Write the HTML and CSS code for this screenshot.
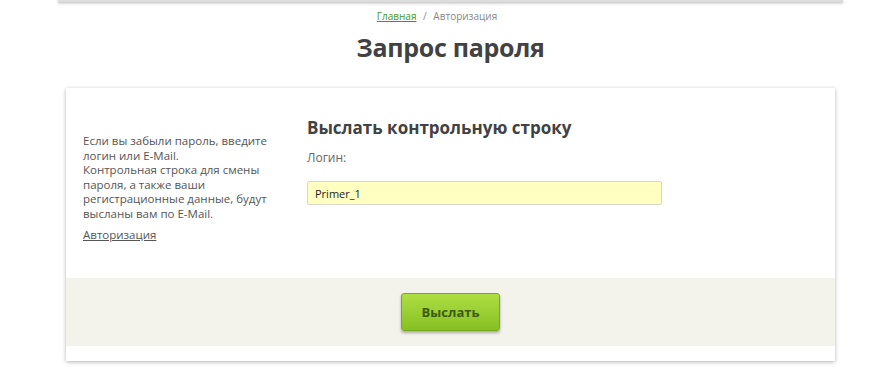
FILE: index.html
```html
<!DOCTYPE html>
<html lang="ru">
<head>
    <meta charset="UTF-8">
    <title>Запрос пароля</title>
    <link rel="stylesheet" href="styles.css">
</head>
<body>
    <div class="page">
        <div class="header-edge"></div>
        <div class="breadcrumbs">
            <a href="#">Главная</a>
            <span class="sep">/</span>
            <span>Авторизация</span>
        </div>
        <h1>Запрос пароля</h1>

        <div class="card">
            <div class="card-body">
                <div class="hint">
                    <p>Если вы забыли пароль, введите логин или E-Mail.<br>
                    Контрольная строка для смены пароля, а также ваши регистрационные данные, будут высланы вам по E-Mail.</p>
                    <a href="#" class="auth-link">Авторизация</a>
                </div>
                <div class="form">
                    <h2>Выслать контрольную строку</h2>
                    <label for="login">Логин:</label>
                    <input type="text" id="login" value="Primer_1">
                </div>
            </div>
            <div class="card-footer">
                <button>Выслать</button>
            </div>
        </div>
    </div>
</body>
</html>
```

FILE: styles.css
```css
body {
    margin: 0;
    padding-left: 10px;
    background: #fff;
    font-family: "Open Sans", "Noto Sans", sans-serif;
    color: #555;
}
.page {
    width: 785px;
    margin: 0 auto;
    padding-bottom: 30px;
}
.header-edge {
    height: 2px;
    background: #ddd;
    box-shadow: 0 1px 3px rgba(0, 0, 0, 0.35);
}
.breadcrumbs {
    margin-top: 7px;
    text-align: center;
    font-size: 10px;
    color: #888;
    padding-right: 27px;
}
.breadcrumbs a {
    color: #3e9a1c;
}
.breadcrumbs .sep {
    margin: 0 4px;
}
h1 {
    margin: 6px 0 0;
    text-align: center;
    font-size: 25px;
    line-height: 36px;
    color: #424242;
    letter-spacing: -0.3px;
}
.card {
    width: 769px;
    margin: 23px auto 0;
    background: #fff;
    box-shadow: 0 1px 4px rgba(0, 0, 0, 0.3);
    padding-bottom: 15px;
}
.card-body {
    display: flex;
    height: 190px;
}
.hint {
    width: 200px;
    flex-shrink: 0;
    padding: 46px 24px 0 17px;
    font-size: 11.5px;
    line-height: 14.5px;
    color: #555;
}
.hint p {
    margin: 0;
}
.auth-link {
    display: inline-block;
    margin-top: 7px;
    color: #555;
}
.form {
    padding-top: 29px;
}
h2 {
    margin: 0;
    font-size: 17px;
    line-height: 22px;
    color: #424242;
}
label {
    display: block;
    margin-top: 10px;
    font-size: 12px;
    color: #666;
}
input {
    display: block;
    margin-top: 15px;
    width: 355px;
    height: 24px;
    box-sizing: border-box;
    padding: 0 7px;
    border: 1px solid #d8d8c8;
    border-radius: 2px;
    background: #ffffc2;
    font-family: inherit;
    font-size: 11px;
    color: #222;
}
.card-footer {
    height: 68px;
    background: #f3f3ec;
    display: flex;
    justify-content: center;
    align-items: center;
}
button {
    width: 99px;
    height: 38px;
    border: 1px solid #79a91c;
    border-radius: 3px;
    background: linear-gradient(#aede42, #86c024);
    box-shadow: 0 2px 3px rgba(0, 0, 0, 0.3);
    font-family: inherit;
    font-size: 13px;
    font-weight: bold;
    color: #3d5a12;
    cursor: pointer;
}
```
